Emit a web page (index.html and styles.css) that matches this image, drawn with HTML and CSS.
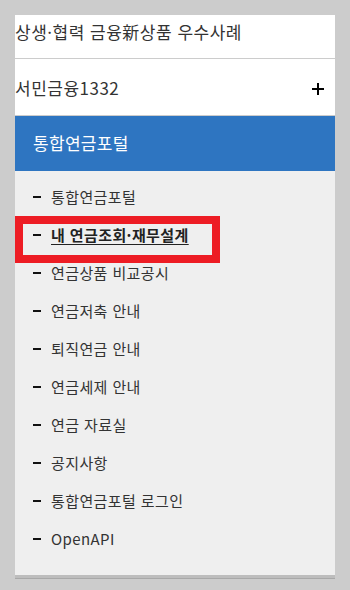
FILE: index.html
```html
<!DOCTYPE html>
<html lang="ko">
<head>
    <meta charset="UTF-8">
    <meta name="viewport" content="width=device-width, initial-scale=1.0">
    <title>통합연금포털</title>
    <link rel="stylesheet" href="styles.css">
</head>
<body>
    <nav class="sidemenu">
        <ul class="depth1">
            <li class="item item-first"><a href="#">상생·협력 금융新상품 우수사례</a></li>
            <li class="item item-toggle"><a href="#">서민금융1332</a><span class="plus"></span></li>
            <li class="item item-open">
                <a class="open-title" href="#">통합연금포털</a>
                <ul class="depth2">
                    <li><a href="#">통합연금포털</a></li>
                    <li class="active"><a href="#">내 연금조회·재무설계</a><span class="highlight"></span></li>
                    <li><a href="#">연금상품 비교공시</a></li>
                    <li><a href="#">연금저축 안내</a></li>
                    <li><a href="#">퇴직연금 안내</a></li>
                    <li><a href="#">연금세제 안내</a></li>
                    <li><a href="#">연금 자료실</a></li>
                    <li><a href="#">공지사항</a></li>
                    <li><a href="#">통합연금포털 로그인</a></li>
                    <li><a href="#">OpenAPI</a></li>
                </ul>
            </li>
        </ul>
    </nav>
</body>
</html>
```

FILE: styles.css
```css
body {
    margin: 0;
    padding: 15px;
    background-color: #cccccc;
    font-family: "Noto Sans CJK KR", "Noto Sans", sans-serif;
    color: #333;
}

a {
    color: inherit;
    text-decoration: none;
}

ul {
    list-style: none;
    margin: 0;
    padding: 0;
}

.sidemenu {
    width: 320px;
    background-color: #fff;
    border-bottom: 3px solid #bdbdbd;
    box-shadow: 0 1px 0 #a8a8a8;
}

.item {
    position: relative;
    border-bottom: 1px solid #cccccc;
    font-size: 17px;
    letter-spacing: 0.5px;
}

.item > a {
    display: block;
}

.item-first > a {
    height: 43px;
    line-height: 34px;
}

.item-toggle > a {
    height: 56px;
    line-height: 58px;
}

.plus {
    position: absolute;
    right: 11px;
    top: 24px;
    width: 12px;
    height: 12px;
}

.plus::before,
.plus::after {
    content: "";
    position: absolute;
    background-color: #000;
}

.plus::before {
    left: 0;
    top: 5px;
    width: 12px;
    height: 2px;
}

.plus::after {
    left: 5px;
    top: 0;
    width: 2px;
    height: 12px;
}

.item-open {
    border-bottom: none;
}

.open-title {
    background-color: #2e75c1;
    color: #fff;
    height: 55px;
    line-height: 54px;
    padding-left: 18px;
    letter-spacing: 0.3px;
}

.depth2 {
    background-color: #efefef;
    padding: 7px 0 17px;
    font-size: 15px;
    letter-spacing: 0.4px;
}

.depth2 li {
    position: relative;
    height: 38px;
    line-height: 38px;
    padding-left: 36px;
}

.depth2 li::before {
    content: "";
    position: absolute;
    left: 18px;
    top: 18px;
    width: 8px;
    height: 2px;
    background-color: #111;
}

.depth2 li a {
    color: #333;
}

.depth2 li.active a {
    font-weight: bold;
    color: #222;
    text-decoration: underline;
    text-underline-offset: 3px;
}

.highlight {
    position: absolute;
    left: 0;
    top: 0;
    width: 189px;
    height: 31px;
    border: 8px solid #ed1c24;
    pointer-events: none;
}
```
